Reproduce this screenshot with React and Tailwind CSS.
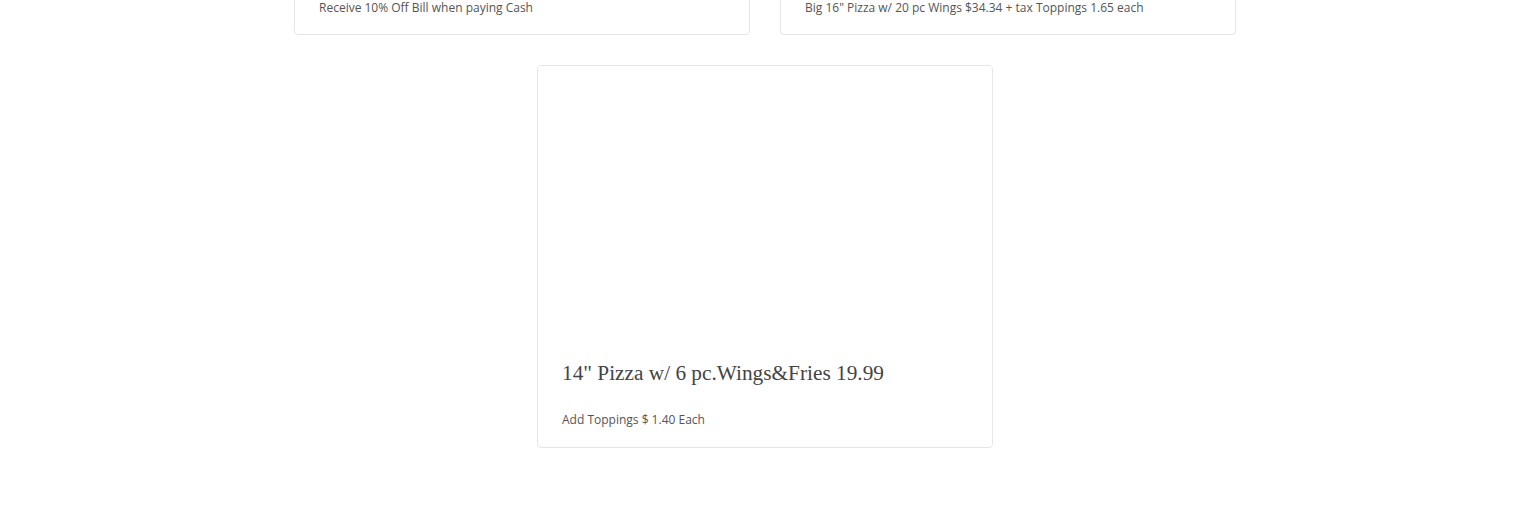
import React from "react";

const body = { fontFamily: '"Open Sans", sans-serif' };
const serif = { fontFamily: '"Liberation Serif", serif' };

const SpecialCard = ({ title, text, image = true }) => (
    <div className="w-[456px] bg-white border border-[#e6e6e6] rounded-[4px] overflow-hidden">
        {image && <div className="h-[268px] bg-white"></div>}
        <div className={image ? "px-6 pt-[25px] pb-[18px]" : "px-6 pt-6 pb-[17px]"}>
            {title && (
                <h3 className="text-[21.3px] leading-[28px] text-[#444] mb-6" style={serif}>
                    {title}
                </h3>
            )}
            <p className="text-[12px] leading-[18px] text-[#555]" style={body}>
                {text}
            </p>
        </div>
    </div>
);

const App = () => {
    return (
        <div className="min-h-screen bg-white overflow-hidden">
            <div className="w-[942px] mx-auto mt-[-2px] flex flex-col items-center gap-[30px]">
                <div className="flex gap-[30px] mt-[-24px]">
                    <SpecialCard image={false} text="Receive 10% Off Bill when paying Cash" />
                    <SpecialCard image={false} text={'Big 16" Pizza w/ 20 pc Wings $34.34 + tax Toppings 1.65 each'} />
                </div>
                <SpecialCard title={'14" Pizza w/ 6 pc.Wings&Fries 19.99'} text="Add Toppings $ 1.40 Each" />
            </div>
        </div>
    );
};

export default App;
